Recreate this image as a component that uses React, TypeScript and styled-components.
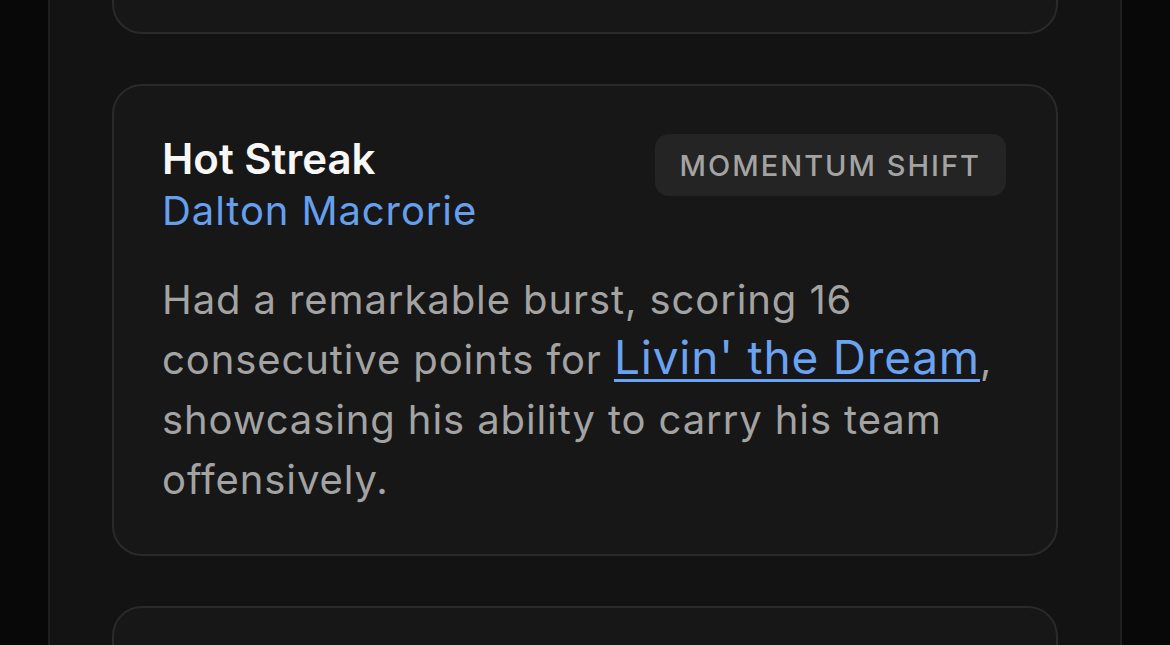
import React from "react";
import styled, { createGlobalStyle } from "styled-components";

const COLORS = {
  page: "#080808",
  panel: "#131313",
  panelEdge: "#1f1f1f",
  card: "#171717",
  cardEdge: "#2a2a2a",
  chip: "#242424",
  white: "#f7f7f7",
  muted: "#a3a3a3",
  blue: "#649ff0",
  link: "#6aa3f2",
};

const GlobalStyle = createGlobalStyle`
  html, body {
    margin: 0;
    padding: 0;
    background: ${COLORS.page};
    font-family: Inter, "Noto Sans", sans-serif;
    -webkit-font-smoothing: antialiased;
  }
`;

const Panel = styled.main`
  width: 1074px;
  height: 645px;
  margin-left: 48px;
  box-sizing: border-box;
  background: ${COLORS.panel};
  border-left: 2px solid ${COLORS.panelEdge};
  border-right: 2px solid ${COLORS.panelEdge};
  overflow: hidden;
`;

const Feed = styled.div`
  display: flex;
  flex-direction: column;
  gap: 50px;
  padding: 0 62px;
  margin-top: -166px;
`;

const Card = styled.article<{ $height?: number }>`
  box-sizing: border-box;
  background: ${COLORS.card};
  border: 2px solid ${COLORS.cardEdge};
  border-radius: 30px;
  padding: 48px 50px 44px 48px;
  min-height: ${(p) => (p.$height ? `${p.$height}px` : "auto")};
`;

const Header = styled.div`
  display: flex;
  justify-content: space-between;
  align-items: flex-start;
  gap: 24px;
`;

const Title = styled.h3`
  margin: 0;
  font-size: 42px;
  line-height: 50px;
  font-weight: 600;
  color: ${COLORS.white};
`;

const Player = styled.div`
  font-size: 40px;
  line-height: 50px;
  letter-spacing: 0.9px;
  margin-top: 2px;
  color: ${COLORS.blue};
`;

const Tag = styled.span`
  flex-shrink: 0;
  background: ${COLORS.chip};
  color: ${COLORS.muted};
  border-radius: 14px;
  padding: 0 25px;
  height: 62px;
  display: flex;
  align-items: center;
  font-size: 29px;
  font-weight: 500;
  letter-spacing: 2px;
  text-transform: uppercase;
`;

const Body = styled.p`
  margin: 34px 0 0;
  font-size: 40px;
  line-height: 60px;
  letter-spacing: 0.9px;
  color: ${COLORS.muted};
`;

const TeamLink = styled.a`
  font-size: 46px;
  line-height: 1;
  letter-spacing: 0.8px;
  color: ${COLORS.link};
  text-decoration: underline;
  text-decoration-thickness: 3px;
  text-underline-offset: 5px;
`;

export default function App() {
  return (
    <>
      <GlobalStyle />
      <Panel>
        <Feed>
          <Card $height={200} />
          <Card>
            <Header>
              <div>
                <Title>Hot Streak</Title>
                <Player>Dalton Macrorie</Player>
              </div>
              <Tag>Momentum Shift</Tag>
            </Header>
            <Body>
              Had a remarkable burst, scoring 16 consecutive points for{" "}
              <TeamLink href="#">Livin' the Dream</TeamLink>, showcasing his
              ability to carry his team offensively.
            </Body>
          </Card>
          <Card $height={200} />
        </Feed>
      </Panel>
    </>
  );
}
